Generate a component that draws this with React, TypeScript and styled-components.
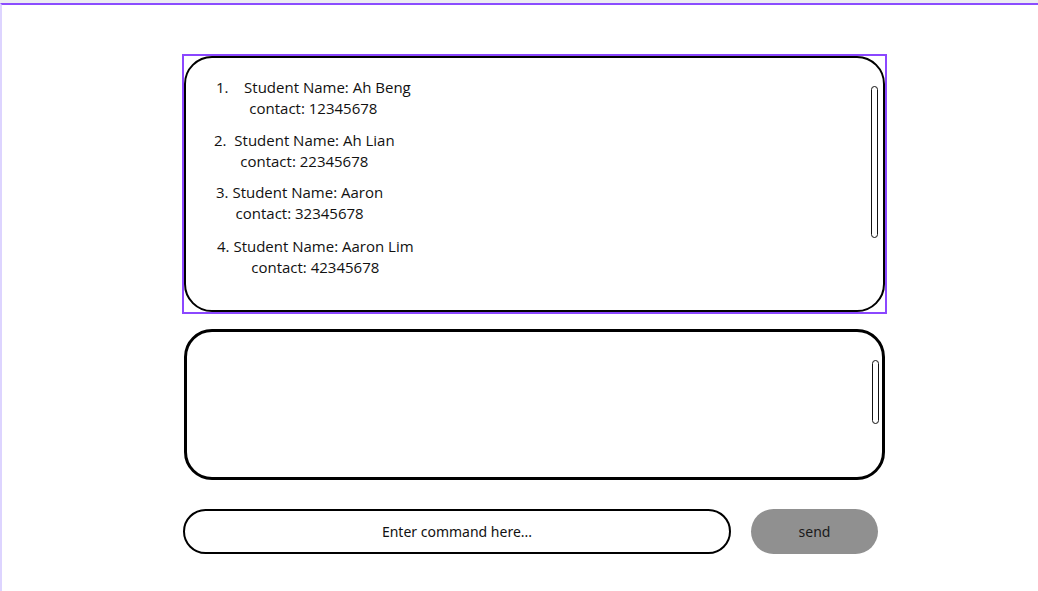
import React from "react";
import styled, { createGlobalStyle } from "styled-components";

const Global = createGlobalStyle`
  html, body { margin: 0; padding: 0; background: #ffffff; }
  body { font-family: "Open Sans", "Noto Sans", sans-serif; color: #111; }
`;

const Frame = styled.div`
  width: 1038px;
  height: 591px;
  box-sizing: border-box;
  border-top: 3px solid #ececf2;
  overflow: hidden;
`;

const Inner = styled.div`
  height: 100%;
  box-sizing: border-box;
  border-top: 2px solid #8b4dff;
  border-left: 2px solid #ddd4ff;
  padding: 49px 0 0 180px;
`;

const Column = styled.div`
  width: 705px;
  display: flex;
  flex-direction: column;
`;

const Selection = styled.div`
  border: 2px solid #8b47ff;
  width: 705px;
  box-sizing: border-box;
`;

const Card = styled.div<{ $h: number; $bw: number; $inset: number }>`
  height: ${(p) => p.$h}px;
  box-sizing: border-box;
  margin: 0 ${(p) => p.$inset}px;
  border: ${(p) => p.$bw}px solid #000;
  border-radius: 28px;
  display: flex;
  background: #fff;
`;

const List = styled.div`
  flex: 1;
  padding: 19px 0 0 29px;
  display: flex;
  flex-direction: column;
  gap: 11px;
`;

const Item = styled.div<{ $dx: number; $mt: number }>`
  width: fit-content;
  margin-left: ${(p) => p.$dx}px;
  margin-top: ${(p) => p.$mt}px;
  text-align: center;
  font-size: 15px;
  line-height: 21px;
  color: #111;
  white-space: pre;
`;

const Pill = styled.div<{ $top: number; $h: number; $right: number }>`
  width: 5px;
  height: ${(p) => p.$h}px;
  margin-top: ${(p) => p.$top}px;
  margin-right: ${(p) => p.$right}px;
  border: 1px solid #111;
  border-radius: 4px;
`;

const Gap = styled.div<{ $h: number }>`
  height: ${(p) => p.$h}px;
`;

const InputRow = styled.div`
  display: flex;
  gap: 20px;
  align-items: center;
`;

const Input = styled.div`
  width: 548px;
  height: 45px;
  box-sizing: border-box;
  border: 2px solid #000;
  border-radius: 23px;
  margin-left: 1px;
  display: flex;
  align-items: center;
  justify-content: center;
  font-family: "Noto Sans", sans-serif;
  font-size: 14px;
  color: #111;
`;

const Send = styled.div`
  width: 127px;
  height: 45px;
  border-radius: 23px;
  background: #909090;
  display: flex;
  align-items: center;
  justify-content: center;
  font-family: "Noto Sans", sans-serif;
  font-size: 14px;
  color: #1a1a1a;
`;

const students = [
  { n: "1.    Student Name: Ah Beng", c: "contact: 12345678", dx: 1, mt: 0 },
  { n: "2.  Student Name: Ah Lian", c: "contact: 22345678", dx: -1, mt: 0 },
  { n: "3. Student Name: Aaron", c: "contact: 32345678", dx: 1, mt: -1 },
  { n: "4. Student Name: Aaron Lim", c: "contact: 42345678", dx: 2, mt: 1 },
];

export default function App() {
  return (
    <>
      <Global />
      <Frame>
        <Inner>
          <Column>
            <Selection>
              <Card $h={256} $bw={2} $inset={0}>
                <List>
                  {students.map((s) => (
                    <Item key={s.c} $dx={s.dx} $mt={s.mt}>
                      {s.n}
                      {"\n"}
                      {s.c}
                    </Item>
                  ))}
                </List>
                <Pill $top={28} $h={150} $right={5} />
              </Card>
            </Selection>
            <Gap $h={15} />
            <Card $h={151} $bw={3} $inset={2}>
              <List />
              <Pill $top={28} $h={62} $right={3} />
            </Card>
            <Gap $h={29} />
            <InputRow>
              <Input>Enter command here...</Input>
              <Send>send</Send>
            </InputRow>
          </Column>
        </Inner>
      </Frame>
    </>
  );
}
